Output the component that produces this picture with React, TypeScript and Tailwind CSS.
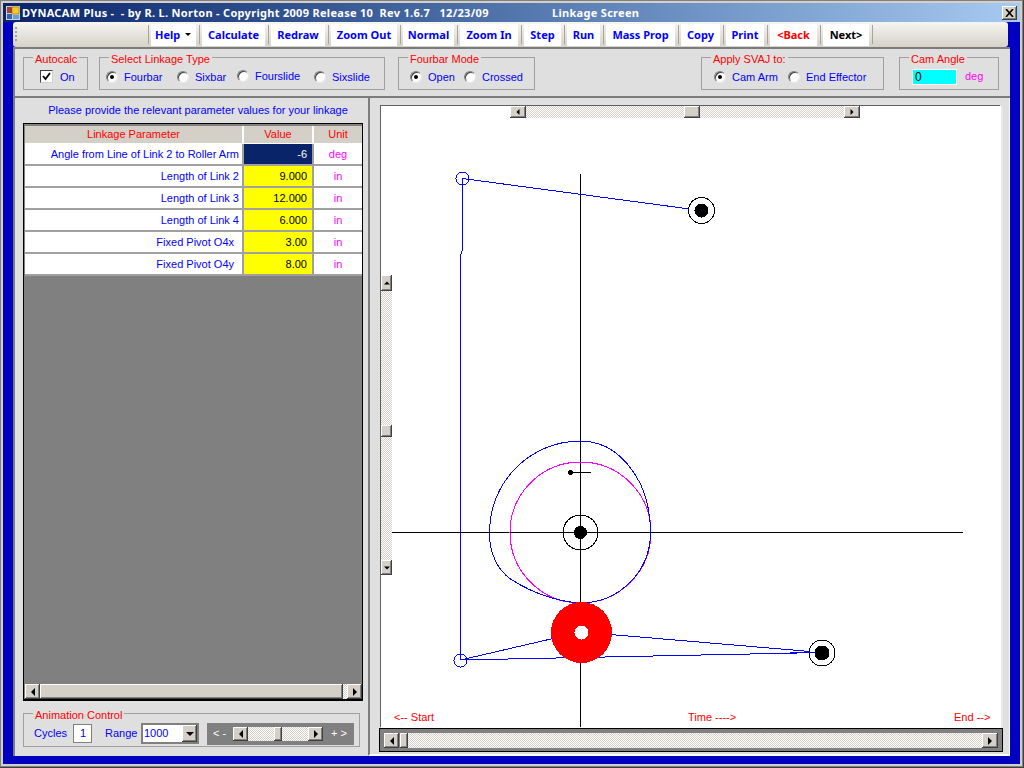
import type { ReactNode } from 'react';

const tools = [
    { label: 'Calculate', w: 'w-[63px]', color: 'text-[#0000ff]' },
    { label: 'Redraw', w: 'w-[54px]', color: 'text-[#0000ff]' },
    { label: 'Zoom Out', w: 'w-[66px]', color: 'text-[#0000ff]' },
    { label: 'Normal', w: 'w-[51px]', color: 'text-[#0000ff]' },
    { label: 'Zoom In', w: 'w-[58px]', color: 'text-[#0000ff]' },
    { label: 'Step', w: 'w-[37px]', color: 'text-[#0000ff]' },
    { label: 'Run', w: 'w-[33px]', color: 'text-[#0000ff]' },
    { label: 'Mass Prop', w: 'w-[69px]', color: 'text-[#0000ff]' },
    { label: 'Copy', w: 'w-[39px]', color: 'text-[#0000ff]' },
    { label: 'Print', w: 'w-[38px]', color: 'text-[#0000ff]' },
    { label: '<Back', w: 'w-[47px]', color: 'text-[#ff0000]' },
    { label: 'Next>', w: 'w-[46px]', color: 'text-black' },
];

const params = [
    { name: 'Angle from Line of Link 2 to Roller Arm', value: '-6', unit: 'deg', selected: true },
    { name: 'Length of Link 2', value: '9.000', unit: 'in' },
    { name: 'Length of Link 3', value: '12.000', unit: 'in' },
    { name: 'Length of Link 4', value: '6.000', unit: 'in' },
    { name: 'Fixed Pivot O4x', value: '3.00', unit: 'in', pad: 'pr-[8px]' },
    { name: 'Fixed Pivot O4y', value: '8.00', unit: 'in', pad: 'pr-[8px]' },
];

const track = 'bg-[repeating-conic-gradient(#d4d0c8_0_25%,#ffffff_0_50%)] bg-[length:2px_2px]';
const bevel = 'bg-[#d4d0c8] shadow-[inset_-1px_-1px_#404040,inset_1px_1px_#ffffff,inset_-2px_-2px_#808080]';

function Arrow({ dir, size = 8 }: { dir: 'left' | 'right' | 'up' | 'down'; size?: number }) {
    const pts = { left: '6,0 6,8 2,4', right: '2,0 2,8 6,4', up: '0,6 8,6 4,2', down: '0,2 8,2 4,6' }[dir];
    return (
        <svg width={size} height={size} viewBox="0 0 8 8" className="block">
            <polygon points={pts} fill="black" />
        </svg>
    );
}

function ScrollBtn({ dir, className, size }: { dir: 'left' | 'right' | 'up' | 'down'; className: string; size?: number }) {
    return (
        <div className={`${bevel} ${className} shrink-0 flex items-center justify-center`}>
            <Arrow dir={dir} size={size} />
        </div>
    );
}

function Radio({ checked }: { checked?: boolean }) {
    return (
        <span className="w-[12px] h-[12px] shrink-0 rounded-full bg-white border border-t-[#808080] border-l-[#808080] border-r-[#e8e8e8] border-b-[#e8e8e8] shadow-[inset_1px_1px_#404040] flex items-center justify-center">
            {checked && <span className="w-[4px] h-[4px] rounded-full bg-black" />}
        </span>
    );
}

function Legend({ title }: { title: string }) {
    return (
        <legend className="ml-[9px] px-[2px] text-[#ff0000] leading-[14px]">
            <span className="relative top-[2px]">{title}</span>
        </legend>
    );
}

function Group({ title, className, children }: { title: string; className: string; children: ReactNode }) {
    return (
        <fieldset className={`border border-[#a0a0a0] shrink-0 h-[40px] ${className}`}>
            <Legend title={title} />
            <div className="flex items-center h-[24px] pt-[1px]">{children}</div>
        </fieldset>
    );
}

function Choice({ label, checked, className }: { label: string; checked?: boolean; className: string }) {
    return (
        <div className={`flex items-center gap-[6px] text-[#0000ff] ${className}`}>
            <Radio checked={checked} />
            <span className="relative top-[1px]">{label}</span>
        </div>
    );
}

function Diagram() {
    return (
        <svg viewBox="381 106 620 622" width={620} height={622} className="block" shapeRendering="crispEdges">
            <g fill="none" stroke="black" strokeWidth="1">
                <path d="M580.5 174V727M392 532.5H963M571 472.5H591" />
            </g>
            {/* magenta prime circle and cam profile */}
            <circle cx="580.5" cy="532.5" r="70.5" fill="none" stroke="#ff00ff" />
            <path
                d="M580.5 603C553 601 528 590 512 580C498 571 489 553 489.5 532C489.5 482 530 441 580.5 441C615 441 632 468 640 483C648 500 650.5 515 650.5 532.5A70 70.5 0 0 1 580.5 603"
                fill="none"
                stroke="#0000ff"
            />
            <circle cx="570.5" cy="472.5" r="2.5" fill="black" />
            <circle cx="580.5" cy="532.5" r="17.5" fill="none" stroke="black" />
            <circle cx="580.5" cy="532.5" r="6.5" fill="black" />
            {/* links */}
            <g fill="none" stroke="#0000ff">
                <path d="M462.5 178.5L701 210.5" />
                <path d="M462.5 178.5V250L460.5 255V660" />
                <path d="M460.5 660L581 632" />
                <path d="M460.5 660L822 652.5" />
                <path d="M581 632L822 652.5" />
                <circle cx="462.5" cy="178.5" r="6.5" />
                <circle cx="460.5" cy="660.5" r="6.5" />
            </g>
            <circle cx="581.5" cy="632.5" r="30.5" fill="#ff0000" />
            <circle cx="581.5" cy="632.5" r="7" fill="white" />
            <circle cx="701.5" cy="210.5" r="13" fill="white" stroke="black" />
            <circle cx="701.5" cy="210.5" r="7" fill="black" />
            <circle cx="822" cy="653" r="13" fill="white" stroke="black" />
            <path d="M790 652.5H815" stroke="#0000ff" fill="none" />
            <circle cx="822" cy="653" r="7.5" fill="black" />
            <g fill="#ff0000" fontSize="11" shapeRendering="auto">
                <text x="394" y="721">{'<-- Start'}</text>
                <text x="688" y="721">{'Time ---->'}</text>
                <text x="954" y="721">{'End -->'}</text>
            </g>
        </svg>
    );
}

export default function App() {
    return (
        <div className="w-[1024px] h-[768px] overflow-hidden flex flex-col p-[3px] bg-[#d4d0c8] border-b border-r border-[#404040] shadow-[inset_0_0_0_1px_#808080] font-[Liberation_Sans,sans-serif] text-[11px] leading-none">
            {/* Title bar */}
            <div className="h-[19px] shrink-0 flex items-center bg-linear-to-r from-[#0a246a] to-[#a6caf0] text-white font-[Noto_Sans,sans-serif] font-bold text-[11px] tracking-[0.3px] whitespace-pre pl-[3px] pr-[3px]">
                <svg width="14" height="14" viewBox="0 0 14 14" className="mr-[2px] shrink-0">
                    <rect width="14" height="14" fill="#d4d0c8" />
                    <rect x="1" y="1" width="5" height="6" fill="#a04040" />
                    <rect x="6" y="1" width="7" height="7" fill="#f8c820" stroke="#806000" strokeWidth="0.5" />
                    <rect x="1" y="8" width="5" height="5" fill="#3060c0" />
                    <rect x="7" y="9" width="6" height="4" fill="#60a0e0" />
                </svg>
                <span className="w-[530px]">DYNACAM Plus -  - by R. L. Norton - Copyright 2009 Release 10  Rev 1.6.7   12/23/09</span>
                <span>Linkage Screen</span>
                <div className={`${bevel} ml-auto w-[15px] h-[14px] flex items-center justify-center`}>
                    <svg width="9" height="8" viewBox="0 0 9 8">
                        <path d="M1 0L8 8M8 0L1 8" stroke="black" strokeWidth="1.6" />
                    </svg>
                </div>
            </div>

            <div className="flex-1 min-h-0 flex flex-col bg-[#0000c0] px-[10px] pb-[8px]">
                {/* Toolbar */}
                <div className="h-[25px] shrink-0 mr-[2px] rounded-[3px] flex items-center bg-linear-to-b from-[#f6f5f2] to-[#d6d2c9] font-[Noto_Sans,sans-serif] font-bold text-[11px]">
                    <div className="ml-[2px] w-[2px] h-[15px] bg-[repeating-linear-gradient(#a0a0a0_0_2px,transparent_2px_4px)]" />
                    <div className="ml-[128px] w-[6px] h-[19px] flex justify-center"><span className="w-px bg-[#a8a49c]" /></div>
                    <div className="w-[45px] h-[22px] bg-white text-[#0000ff] flex items-center pl-[4px] gap-[5px]">
                        Help
                        <svg width="6" height="3" viewBox="0 0 6 3"><polygon points="0,0 6,0 3,3" fill="black" /></svg>
                    </div>
                    {tools.map((t) => (
                        <div key={t.label} className="flex items-center">
                            <div className="w-[6px] h-[19px] flex justify-center"><span className="w-px bg-[#a8a49c]" /></div>
                            <div className={`${t.w} ${t.color} h-[22px] bg-white flex items-center justify-center whitespace-nowrap`}>{t.label}</div>
                        </div>
                    ))}
                    <div className="w-[6px] h-[19px] flex justify-center"><span className="w-px bg-[#a8a49c]" /></div>
                </div>

                <div className="flex-1 min-h-0 flex flex-col bg-[#dfdfdf] border-l-2 border-t-2 border-[#7c7c7c]">
                    {/* Option groups */}
                    <div className="h-[49px] shrink-0 flex items-start pt-[1px] pl-[8px] border-b-2 border-[#7c7c7c]">
                        <Group title="Autocalc" className="w-[65px]">
                            <span className="ml-[16px] w-[13px] h-[13px] bg-white border border-t-[#404040] border-l-[#404040] border-r-[#d4d0c8] border-b-[#d4d0c8] flex items-center justify-center">
                                <svg width="9" height="9" viewBox="0 0 9 9"><path d="M1 4L3.5 7L8 1" fill="none" stroke="black" strokeWidth="1.8" /></svg>
                            </span>
                            <span className="ml-[7px] relative top-[1px] text-[#0000ff]">On</span>
                        </Group>
                        <Group title="Select Linkage Type" className="ml-[11px] w-[286px]">
                            <Choice label="Fourbar" checked className="ml-[6px] w-[71px]" />
                            <Choice label="Sixbar" className="w-[60px]" />
                            <Choice label="Fourslide" className="w-[77px] -mt-[2px]" />
                            <Choice label="Sixslide" className="w-[60px]" />
                        </Group>
                        <Group title="Fourbar Mode" className="ml-[13px] w-[137px]">
                            <Choice label="Open" checked className="ml-[11px] w-[54px]" />
                            <Choice label="Crossed" className="w-[60px]" />
                        </Group>
                        <Group title="Apply SVAJ to:" className="ml-[166px] w-[183px]">
                            <Choice label="Cam Arm" checked className="ml-[12px] w-[74px]" />
                            <Choice label="End Effector" className="w-[90px]" />
                        </Group>
                        <Group title="Cam Angle" className="ml-[15px] w-[100px]">
                            <span className="ml-[12px] w-[45px] h-[16px] bg-[#00ffff] border border-white pl-[2px] flex items-center text-[12px]">0</span>
                            <span className="ml-[8px] text-[#ff00ff]">deg</span>
                        </Group>
                    </div>

                    <div className="flex-1 min-h-0 flex">
                        {/* Parameter table */}
                        <div className="w-[353px] shrink-0 flex flex-col pl-[8px] pr-[5px]">
                            <div className="h-[25px] shrink-0 flex items-center justify-center pl-[10px] text-[#0000ff]">
                                Please provide the relevant parameter values for your linkage
                            </div>
                            <div className="h-[578px] shrink-0 flex flex-col bg-[#808080] border border-b-2 border-black pt-[2px] pl-px">
                                <div className="h-[18px] shrink-0 flex bg-[#d4d0c8] text-[#ff0000] border-b border-white">
                                    <div className="w-[219px] flex items-center justify-center border-r-2 border-white">Linkage Parameter</div>
                                    <div className="w-[70px] flex items-center justify-center border-r-2 border-white">Value</div>
                                    <div className="flex-1 flex items-center justify-center">Unit</div>
                                </div>
                                {params.map((p) => (
                                    <div key={p.name} className="h-[22px] shrink-0 flex bg-white border-b-2 border-[#a0a0a0]">
                                        <div className={`w-[219px] flex items-center justify-end text-[#0000ff] border-r-2 border-[#a0a0a0] ${p.pad ?? 'pr-[3px]'}`}>{p.name}</div>
                                        <div className={`w-[70px] flex items-center justify-end pr-[5px] border-r-2 border-[#a0a0a0] ${p.selected ? 'bg-[#0a246a] text-white' : 'bg-[#ffff00] text-black'}`}>{p.value}</div>
                                        <div className="flex-1 flex items-center justify-center text-[#ff00ff]">{p.unit}</div>
                                    </div>
                                ))}
                                <div className="flex-1" />
                                <div className="h-[15px] shrink-0 flex">
                                    <ScrollBtn dir="left" className="w-[15px] h-[15px]" />
                                    <div className={`${bevel} flex-1`} />
                                    <div className={`${track} w-[4px]`} />
                                    <ScrollBtn dir="right" className="w-[15px] h-[15px]" />
                                </div>
                            </div>
                            <fieldset className="mt-[5px] h-[41px] shrink-0 w-[337px] border border-[#a0a0a0]">
                                <Legend title="Animation Control" />
                                <div className="h-[27px] flex items-center">
                                    <span className="ml-[10px] w-[32px] text-[#0000ff]">Cycles</span>
                                    <span className="ml-[7px] w-[19px] h-[19px] bg-white border border-[#808080] flex items-center justify-end pr-[5px] text-[#0000ff]">1</span>
                                    <span className="ml-[13px] w-[32px] text-[#0000ff]">Range</span>
                                    <div className="ml-[4px] w-[58px] h-[21px] bg-white border-2 border-[#808080] flex items-center text-[#0000ff] pl-px">
                                        1000
                                        <div className={`${bevel} ml-auto w-[15px] h-full flex items-center justify-center`}>
                                            <Arrow dir="down" />
                                        </div>
                                    </div>
                                    <div className="ml-[8px] w-[147px] h-[22px] bg-[#808080] flex items-center text-white">
                                        <span className="ml-[6px] w-[20px]">{'< -'}</span>
                                        <div className="flex h-[14px] w-[90px]">
                                            <ScrollBtn dir="left" className="w-[15px] h-[14px]" />
                                            <div className={`${track} w-[26px]`} />
                                            <div className={`${bevel} w-[8px]`} />
                                            <div className={`${track} flex-1`} />
                                            <ScrollBtn dir="right" className="w-[15px] h-[14px]" />
                                        </div>
                                        <span className="ml-[8px]">{'+ >'}</span>
                                    </div>
                                </div>
                            </fieldset>
                        </div>

                        {/* Drawing area */}
                        <div className="relative flex-1 min-w-0 flex flex-col border-l-2 border-[#7c7c7c] border-r border-r-white border-b-2 border-b-white pl-[11px] pt-[8px]">
                            <div className="relative w-[620px] h-[622px] shrink-0 bg-white shadow-[-1px_-1px_#606060,2px_0_#e8e8e8]">
                                <Diagram />
                                <div className="absolute left-[129px] top-0 w-[350px] h-[12px] flex">
                                    <ScrollBtn dir="left" className="w-[16px] h-[12px]" size={6} />
                                    <div className={`${track} w-[158px]`} />
                                    <div className={`${bevel} w-[16px]`} />
                                    <div className={`${track} flex-1`} />
                                    <ScrollBtn dir="right" className="w-[16px] h-[12px]" size={6} />
                                </div>
                                <div className="absolute left-0 top-[169px] w-[11px] h-[300px] flex flex-col">
                                    <ScrollBtn dir="up" className="w-[11px] h-[16px]" size={6} />
                                    <div className={`${track} h-[134px]`} />
                                    <div className={`${bevel} h-[12px]`} />
                                    <div className={`${track} flex-1`} />
                                    <ScrollBtn dir="down" className="w-[11px] h-[15px]" size={6} />
                                </div>
                            </div>
                            <div className="w-[624px] h-[24px] -ml-[2px] shrink-0 flex items-start bg-[#808080] border border-black px-[4px] pt-[4px]">
                                <ScrollBtn dir="left" className="w-[15px] h-[15px]" />
                                <div className={`${bevel} w-[8px] h-[15px] ml-px`} />
                                <div className={`${track} flex-1 h-[15px]`} />
                                <ScrollBtn dir="right" className="w-[16px] h-[15px]" />
                            </div>
                        </div>
                    </div>
                </div>
            </div>
        </div>
    );
}
